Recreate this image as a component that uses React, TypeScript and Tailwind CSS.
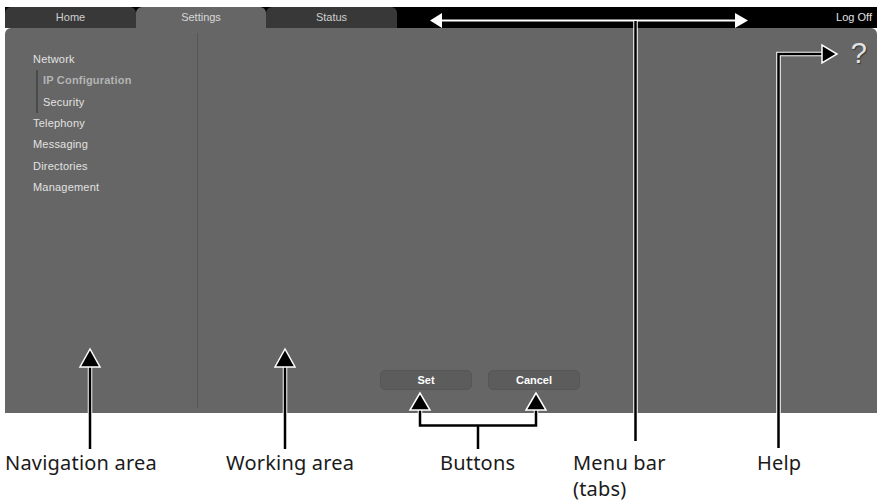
const ui = "font-['Liberation_Sans',Arial,sans-serif]";

const tabs = [
  { label: "Home", active: false },
  { label: "Settings", active: true },
  { label: "Status", active: false },
];

function Callout({ d }: { d: string }) {
  return (
    <>
      <path d={d} fill="none" stroke="#fff" strokeWidth={4.5} />
      <path d={d} fill="none" stroke="#000" strokeWidth={2.5} />
    </>
  );
}

function Head({ points }: { points: string }) {
  return <polygon points={points} fill="#000" stroke="#fff" strokeWidth={1.5} strokeLinejoin="miter" />;
}

export default function App() {
  return (
    <div className="relative w-[877px] h-[503px] bg-white overflow-hidden">
      <div className={`pt-[7px] pl-[5px] ${ui}`}>
        {/* menu bar */}
        <div className="flex h-[21px] bg-black">
          {tabs.map((t) => (
            <div
              key={t.label}
              className={`flex items-center justify-center rounded-t-[6px] text-[11px] ${
                t.active ? "w-[130px] bg-[#666] text-[#d8d8d8]" : "w-[131px] bg-[#383838] text-[#cfcfcf]"
              }`}
            >
              {t.label}
            </div>
          ))}
          <div className="flex-1" />
          <div className="pr-[5px] pt-[2px] text-[11px] leading-[16px] text-[#e0e0e0]">Log Off</div>
        </div>

        {/* panel */}
        <div className="flex h-[385px] bg-[#666] rounded-t-[6px]">
          <nav className="w-[193px] py-[5px]">
            <div className="h-full border-r border-[#555] pl-[28px] pt-[16px] text-[11px] leading-[21.33px] tracking-[0.2px] text-[#e2e2e2]">
              <div>Network</div>
              <div className="ml-[3px] border-l-2 border-[#4b4b4b] pl-[5px]">
                <div className="font-bold text-[#b4b4b4]">IP Configuration</div>
                <div>Security</div>
              </div>
              <div>Telephony</div>
              <div>Messaging</div>
              <div>Directories</div>
              <div>Management</div>
            </div>
          </nav>

          <section className="flex-1 flex flex-col">
            <div className="flex justify-end pr-[10px] pt-[8px]">
              <span className="text-[29px] leading-[34px] text-[#e4e4e4] [text-shadow:1px_1px_1px_#333]">?</span>
            </div>
            <div className="flex-1" />
            <div className="flex gap-[16px] pl-[182px] pb-[23px]">
              <button className="w-[92px] h-[20px] rounded-[5px] border border-[#575757] bg-[#5c5c5c] text-[11px] font-bold text-white">
                Set
              </button>
              <button className="w-[92px] h-[20px] rounded-[5px] border border-[#575757] bg-[#5c5c5c] text-[11px] font-bold text-white">
                Cancel
              </button>
            </div>
          </section>
        </div>
      </div>

      {/* callout labels */}
      <div className="absolute inset-0 font-['Noto_Sans',sans-serif] text-[20px] leading-[26px] tracking-[0.2px] text-[#1a1a1a]">
        <span className="absolute left-[5px] top-[450px]">Navigation area</span>
        <span className="absolute left-[226px] top-[450px]">Working area</span>
        <span className="absolute left-[440px] top-[450px]">Buttons</span>
        <span className="absolute left-[573px] top-[450px]">
          Menu bar
          <br />
          (tabs)
        </span>
        <span className="absolute left-[757px] top-[450px]">Help</span>
      </div>

      {/* callout arrows */}
      <svg className="absolute inset-0 pointer-events-none" width={877} height={503} viewBox="0 0 877 503">
        {/* menu bar */}
        <line x1={438} y1={20.5} x2={738} y2={20.5} stroke="#fff" strokeWidth={2} />
        <polygon points="430,20.5 442,13 442,28" fill="#fff" />
        <polygon points="748,20.5 735,13 735,28" fill="#fff" />
        <Callout d="M635.5 21 V441" />
        {/* help */}
        <Callout d="M778.5 448 V54 H823" />
        <Head points="822,45 822,63 837,54" />
        {/* navigation */}
        <Callout d="M90 366 V449" />
        <Head points="90,349 80,367 100,367" />
        {/* working */}
        <Callout d="M285 366 V449" />
        <Head points="285,349 275,367 295,367" />
        {/* buttons */}
        <Callout d="M420 409 V425.5 H536 V409 M478 425.5 V449" />
        <Head points="420,393 410,410 430,410" />
        <Head points="536,393 526,410 546,410" />
      </svg>
    </div>
  );
}
